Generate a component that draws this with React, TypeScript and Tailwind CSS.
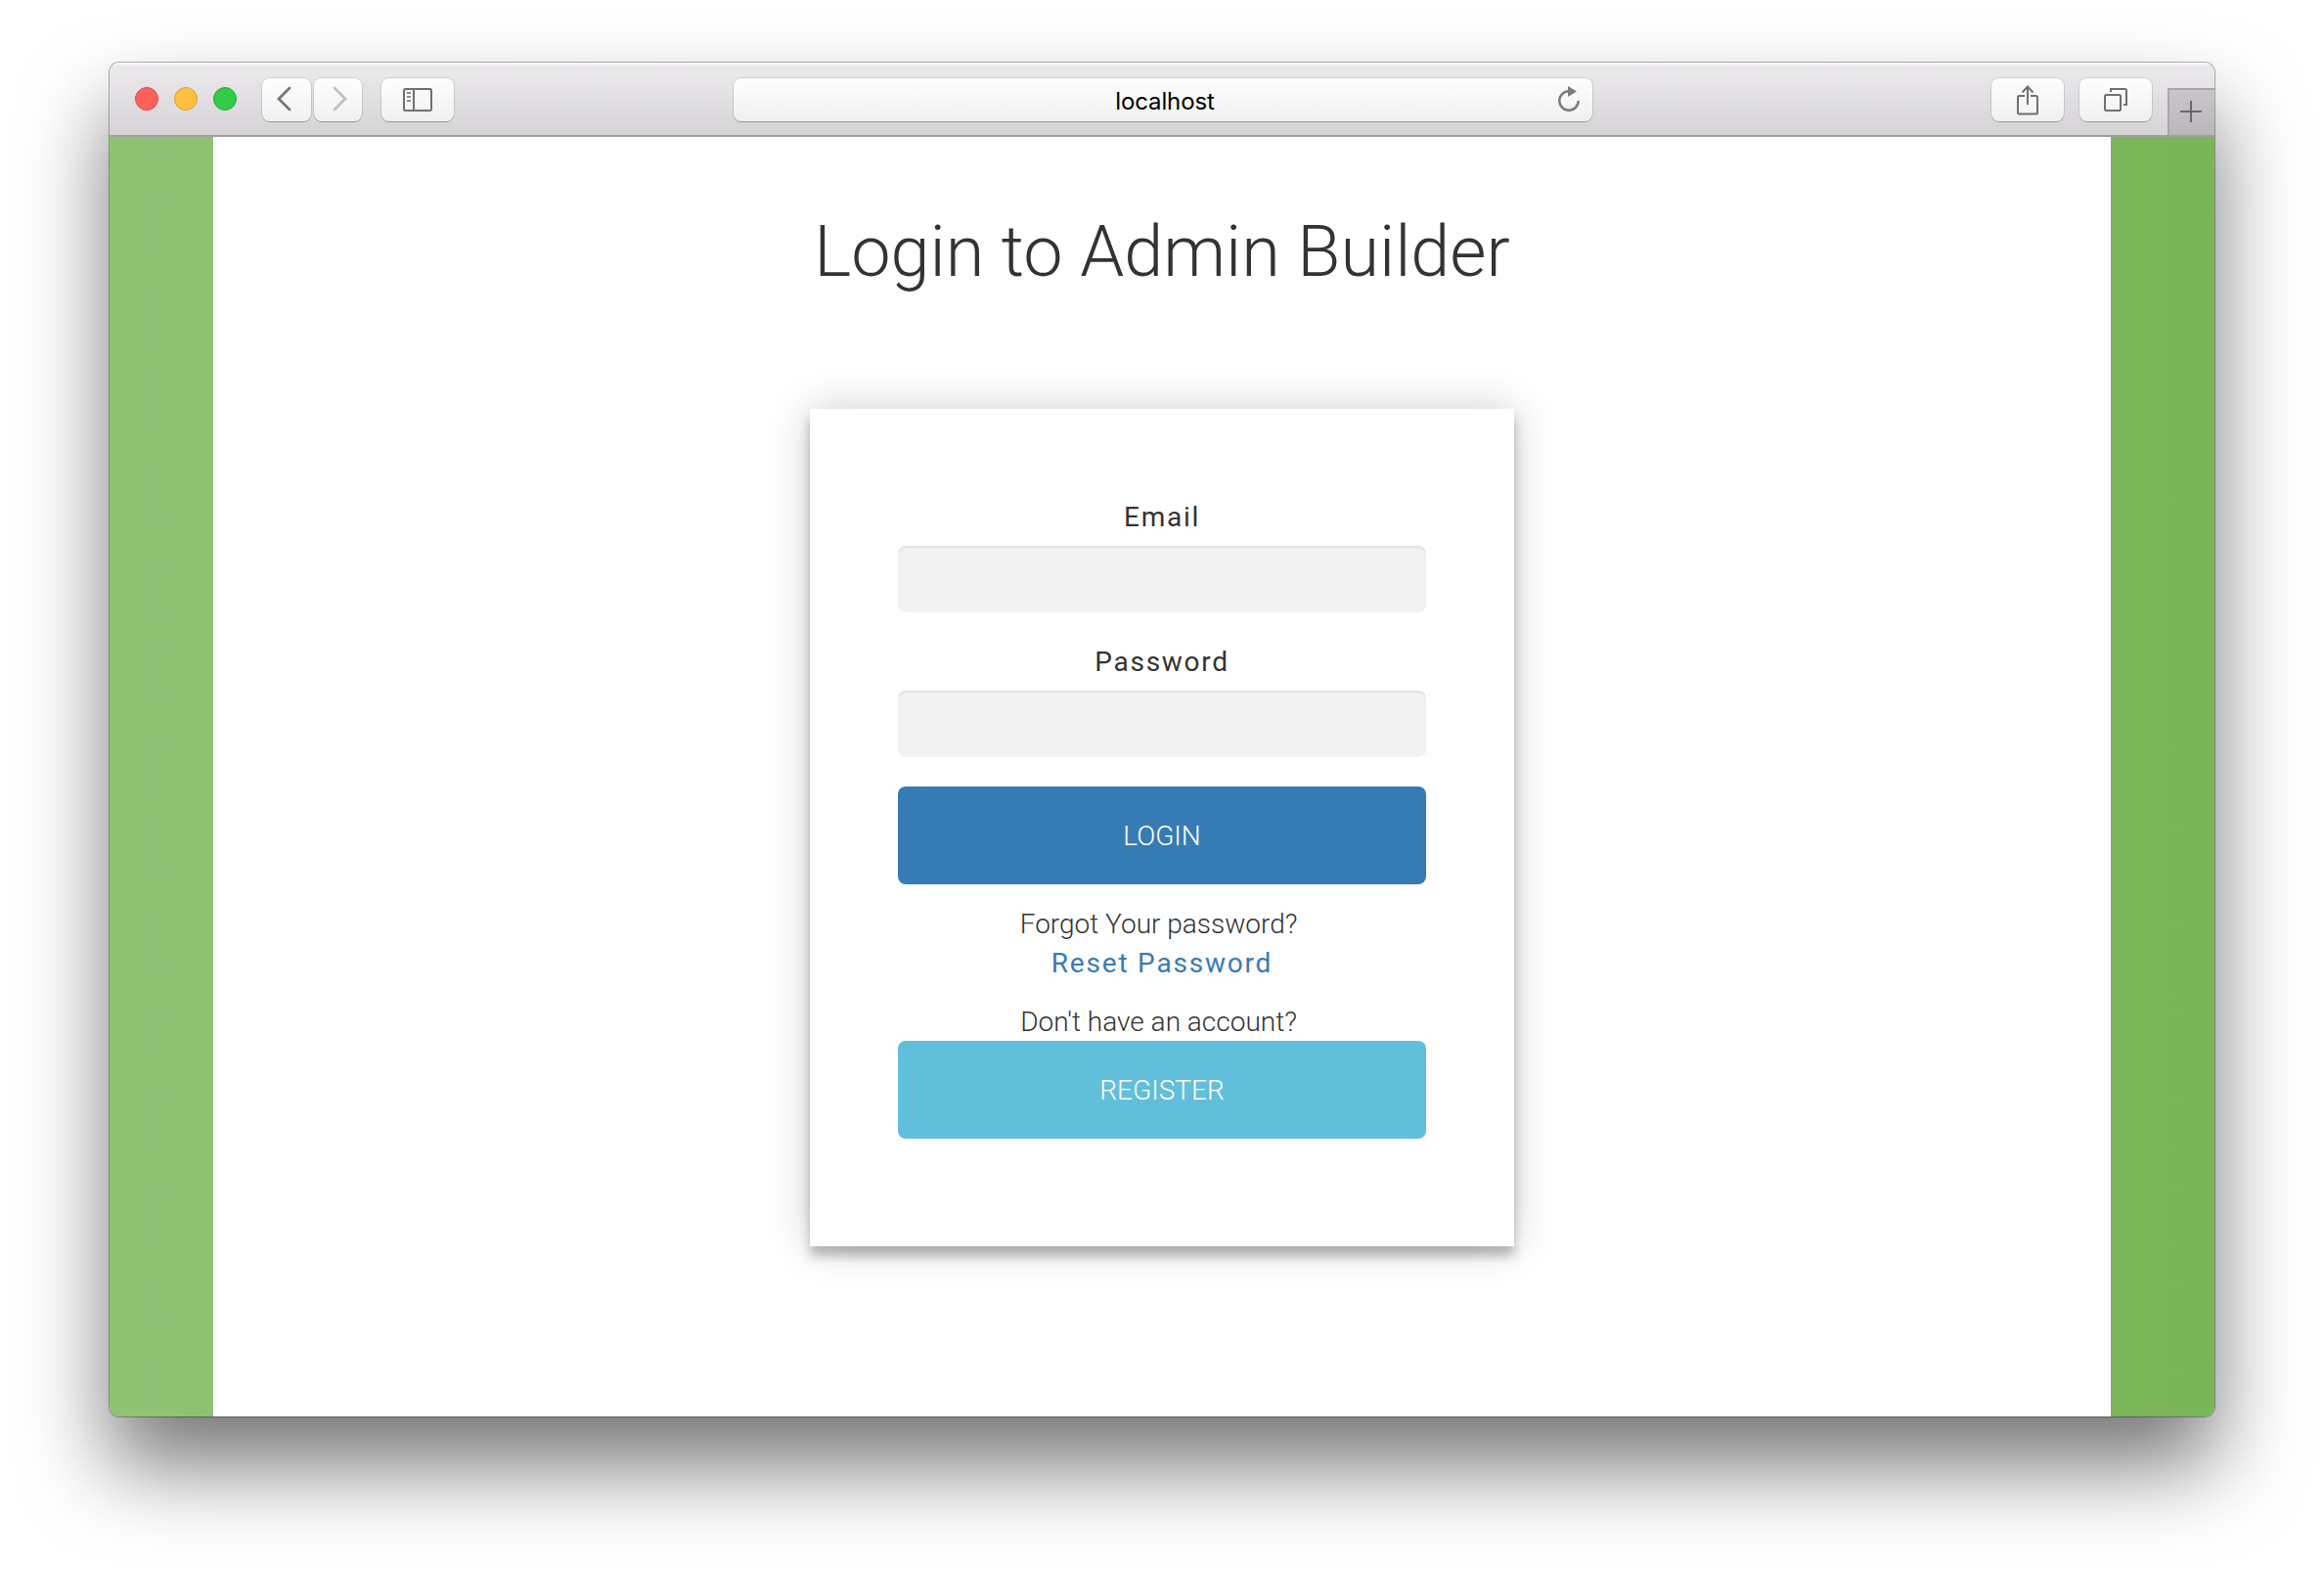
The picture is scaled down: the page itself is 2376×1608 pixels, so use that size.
import React from 'react';

const toolButton =
  'flex h-[44px] items-center justify-center rounded-[8px] bg-linear-to-b from-[#fefefe] to-[#f0f0f0] shadow-[0_0_0_1px_rgba(0,0,0,0.11),0_1px_0_0_rgba(0,0,0,0.22)]';

function Toolbar() {
  return (
    <div className="relative flex h-[76px] items-start border-b-2 border-[#a29ea3] bg-linear-to-b from-[#edebee] to-[#d6d3d7] pt-4 shadow-[inset_0_2px_1px_rgba(255,255,255,0.7)]">
      <div className="ml-[26px] mt-[9px] flex gap-4">
        <div className="size-6 rounded-full border border-[#e2463f] bg-[#ff605c]" />
        <div className="size-6 rounded-full border border-[#dfa032] bg-[#ffbf42]" />
        <div className="size-6 rounded-full border border-[#1fae33] bg-[#34ca4a]" />
      </div>
      <div className="ml-[26px] flex gap-[3px]">
        <div className={`${toolButton} w-[50px]`}>
          <svg className="mb-[2px] mr-[6px]" width="16" height="26" viewBox="0 0 16 26" fill="none" stroke="#767676" strokeWidth="2.8">
            <path d="M14 2 3 13l11 11" strokeLinecap="round" />
          </svg>
        </div>
        <div className={`${toolButton} w-[49px]`}>
          <svg className="mb-[2px] ml-[5px]" width="16" height="26" viewBox="0 0 16 26" fill="none" stroke="#c2c2c2" strokeWidth="2.8">
            <path d="m2 2 11 11L2 24" strokeLinecap="round" />
          </svg>
        </div>
      </div>
      <div className={`${toolButton} ml-5 w-[74px]`}>
        <svg width="30" height="24" viewBox="0 0 30 24" fill="none" stroke="#707070" strokeWidth="2">
          <rect x="1" y="1" width="28" height="22" rx="1.5" />
          <path d="M11 1v22" />
          <path d="M4 5h4M4 9h4M4 13h4" stroke="#8e8e8e" />
        </svg>
      </div>
      <div className={`${toolButton} relative ml-[286px] w-[878px]`}>
        <span className="relative left-[2px] top-[2px] font-['Inter'] text-[24px] leading-none tracking-[-0.1px] text-black">localhost</span>
        <svg className="absolute right-[11px] top-[7px]" width="26" height="28" viewBox="0 0 26 28" fill="none">
          <path d="M13 6.300a9.700 9.700 0 1 0 9.700 9.700" stroke="#7c7c7c" strokeWidth="2.500" />
          <path d="M12 1v11l9-5.500z" fill="#7c7c7c" />
        </svg>
      </div>
      <div className={`${toolButton} ml-[408px] w-[74px]`}>
        <svg className="mb-px" width="24" height="32" viewBox="0 0 24 32" fill="none" stroke="#707070" strokeWidth="2">
          <path d="M9 12H3.500a1.500 1.500 0 0 0-1.500 1.500V29a1.500 1.500 0 0 0 1.500 1.500h17A1.500 1.500 0 0 0 22 29V13.500a1.500 1.500 0 0 0-1.500-1.500H15" />
          <path d="M12 21V3M6.500 8.500 12 2.500l5.500 6" />
        </svg>
      </div>
      <div className={`${toolButton} ml-4 w-[74px]`}>
        <svg width="26" height="26" viewBox="0 0 26 26" fill="none" stroke="#707070" strokeWidth="2">
          <rect x="2" y="8" width="16" height="16" rx="1.500" />
          <path d="M8 5V2h14.500a1.500 1.500 0 0 1 1.500 1.500V18h-3" />
        </svg>
      </div>
      <div className="-mt-4 ml-auto flex h-[74px] flex-col justify-end">
        <div className="flex h-[48px] w-[48px] items-start border-l-2 border-t-2 border-[#a8a5a9] bg-linear-to-b from-[#c9c6ca] to-[#bab7bb] pl-[11px] pt-[11px]">
          <svg width="22" height="22" viewBox="0 0 22 22" stroke="#6a686b" strokeWidth="2">
            <path d="M11 0v22M0 11h22" />
          </svg>
        </div>
      </div>
    </div>
  );
}

function Field({ label, type }: { label: string; type: string }) {
  return (
    <label className="mb-[30px] block text-center">
      <span className="block pb-[9px] pt-px font-normal tracking-[1.7px]">{label}</span>
      <input
        type={type}
        className="block h-[68px] w-full rounded-lg bg-[#f2f2f2] px-6 shadow-[inset_0_2px_2px_rgba(0,0,0,0.075)] outline-none"
      />
    </label>
  );
}

function LoginCard() {
  return (
    <form className="w-[720px] bg-white px-[90px] pb-[110px] pt-[90px] text-center text-[28px] font-light leading-[40px] text-[#333] shadow-[0_0_40px_0_rgba(0,0,0,0.2),0_10px_10px_0_rgba(0,0,0,0.24)]">
      <Field label="Email" type="email" />
      <Field label="Password" type="password" />
      <button type="button" className="mb-[21px] block h-[100px] w-full rounded-lg bg-[#377bb5] pt-0.5 text-white">
        LOGIN
      </button>
      <p>Forgot Your password?&nbsp;</p>
      <a className="mb-5 block font-normal tracking-[1.8px] text-[#377bb5]">Reset Password</a>
      <p className="-mb-px">Don't have an account?&nbsp;</p>
      <button type="button" className="block h-[100px] w-full rounded-lg bg-[#61bfdb] pt-0.5 text-white">
        REGISTER
      </button>
    </form>
  );
}

export default function App() {
  return (
    <div className="h-[1608px] w-[2376px] overflow-hidden bg-white px-[112px] pt-[64px] font-['Roboto',sans-serif]">
      <div className="rounded-[10px] shadow-[0_0_0_1px_rgba(0,0,0,0.3),0_50px_88px_rgba(0,0,0,0.54)]">
        <div className="h-[1384px] overflow-hidden rounded-[10px]">
          <Toolbar />
          <main className="h-[1308px] bg-linear-to-r from-[#8fc374] to-[#7ab557] px-[106px]">
            <div className="flex h-full flex-col items-center bg-white">
              <h1 className="mb-[120px] mt-[78px] text-[72px] font-light leading-[80px] text-[#333]">Login to Admin Builder</h1>
              <LoginCard />
            </div>
          </main>
        </div>
      </div>
    </div>
  );
}
